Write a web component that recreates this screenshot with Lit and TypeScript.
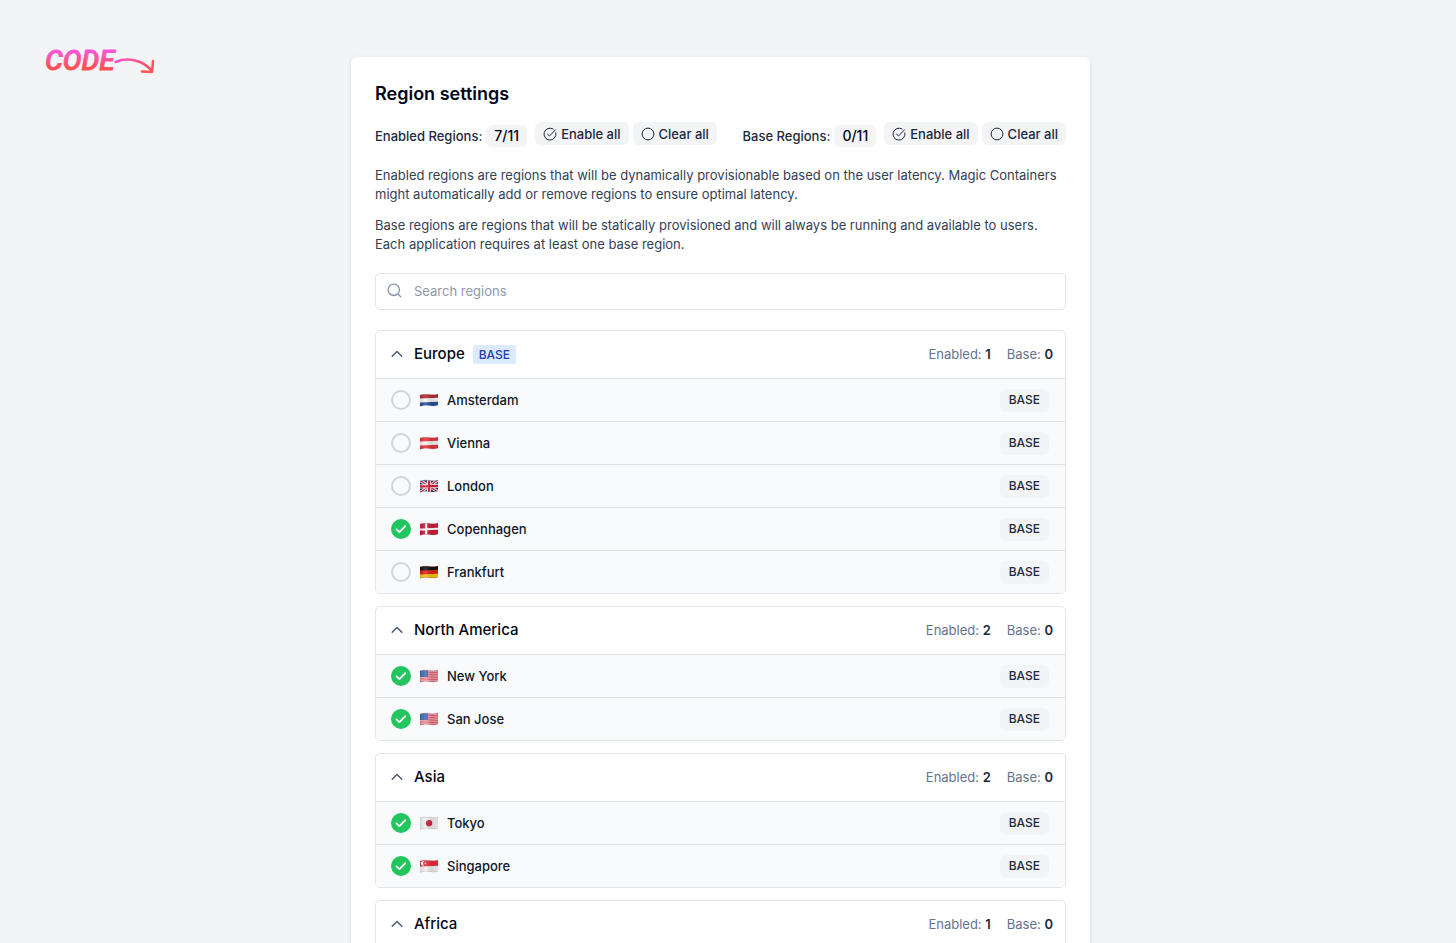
import { LitElement, html, css, svg, nothing } from "lit";
import { customElement, state, property } from "lit/decorators.js";

interface Region { name: string; flag: string; on: boolean }
interface Group { name: string; base?: boolean; enabled: number; regions: Region[] }

const unionJack = svg`
  <rect width="36" height="24" fill="#21357a"/>
  <path d="M0 0 36 24M36 0 0 24" stroke="#fff" stroke-width="6"/>
  <path d="M0 0 36 24M36 0 0 24" stroke="#d3203a" stroke-width="2.4"/>
  <path d="M18 0V24M0 12H36" stroke="#fff" stroke-width="8"/>
  <path d="M18 0V24M0 12H36" stroke="#d3203a" stroke-width="4.6"/>`;

const stars = svg`
  <rect width="36" height="24" fill="#f6d3d6"/>
  <path d="M0 1.5H36M0 5H36M0 8.500H36M0 12H36M0 15.500H36M0 19H36M0 22.500H36" stroke="#e0626e" stroke-width="2.200"/>
  <rect width="16" height="13" fill="#3c6cb0"/>
  <path d="M2 3H15M2 6.500H15M2 10H15" stroke="#7fa1d2" stroke-width="1" stroke-dasharray="1 2"/>`;

const flags: Record<string, unknown> = {
  nl: svg`<rect width="36" height="24" fill="#f5f5f5"/><rect width="36" height="8" fill="#b52a32"/><rect y="16" width="36" height="8" fill="#25509a"/>`,
  at: svg`<rect width="36" height="24" fill="#f7f2f2"/><rect width="36" height="8" fill="#e2383a"/><rect y="16" width="36" height="8" fill="#e2383a"/>`,
  gb: unionJack,
  dk: svg`<rect width="36" height="24" fill="#c9203c"/><path d="M12.500 0V24M0 12H36" stroke="#fff" stroke-width="4"/>`,
  de: svg`<rect width="36" height="24" fill="#dc2418"/><rect width="36" height="8" fill="#111"/><rect y="16" width="36" height="8" fill="#f8c413"/>`,
  us: stars,
  jp: svg`<rect width="36" height="24" fill="#f0f0f0"/><circle cx="18" cy="12" r="6.500" fill="#cf1f3f"/>`,
  sg: svg`<rect width="36" height="24" fill="#f0eeee"/><rect width="36" height="12" fill="#e32f3b"/><path d="M8 2a4.500 4.500 0 1 0 0 8a5 5 0 0 1 0-8Z" fill="#fff"/><circle cx="10.500" cy="6" r="1.800" fill="#f6b8bc"/>`,
};

@customElement("region-flag")
class RegionFlag extends LitElement {
  @property() code = "";
  static styles = css`
    :host { display: flex; }
    svg { width: 18px; height: 14px; display: block; }
  `;
  render() {
    return html`<svg viewBox="0 0 36 28" aria-hidden="true">
      <defs>
        <clipPath id="wave"><path d="M0 4C8 1 13 2 19 3S30 4 36 2V24C30 27 24 26 18 25S7 24 0 27Z"/></clipPath>
        <linearGradient id="shade">
          <stop offset="0" stop-opacity=".08"/><stop offset=".3" stop-color="#fff" stop-opacity=".12"/>
          <stop offset=".65" stop-opacity=".12"/><stop offset="1" stop-opacity=".04"/>
        </linearGradient>
      </defs>
      <g clip-path="url(#wave)">
        <rect width="36" height="28" fill="#d0d0d0"/>
        <g transform="translate(0 3) skewY(-2)">${flags[this.code]}</g>
        <rect width="36" height="28" fill="url(#shade)"/>
      </g>
      <path d="M0 4C8 1 13 2 19 3S30 4 36 2V24C30 27 24 26 18 25S7 24 0 27Z" fill="none" stroke="#000" stroke-opacity=".18"/>
    </svg>`;
  }
}

@customElement("app-root")
class AppRoot extends LitElement {
  @state() private groups: Group[] = [
    { name: "Europe", base: true, enabled: 1, regions: [
      { name: "Amsterdam", flag: "nl", on: false },
      { name: "Vienna", flag: "at", on: false },
      { name: "London", flag: "gb", on: false },
      { name: "Copenhagen", flag: "dk", on: true },
      { name: "Frankfurt", flag: "de", on: false },
    ] },
    { name: "North America", enabled: 2, regions: [
      { name: "New York", flag: "us", on: true },
      { name: "San Jose", flag: "us", on: true },
    ] },
    { name: "Asia", enabled: 2, regions: [
      { name: "Tokyo", flag: "jp", on: true },
      { name: "Singapore", flag: "sg", on: true },
    ] },
    { name: "Africa", enabled: 1, regions: [] },
  ];

  static styles = css`
    * { box-sizing: border-box; }
    :host {
      display: block; position: relative; height: 100vh; overflow: hidden;
      background: #f3f4f6; color: #1e293b;
      font: 13px/20px Inter, sans-serif;
    }
    button, input { font: inherit; color: inherit; }
    button { border: 0; background: none; padding: 0; cursor: pointer; }
    h1, h2, p { margin: 0; }
    svg { display: block; flex: none; }
    .logo { position: absolute; left: 40px; top: 40px; }
    .logo svg { width: 120px; height: 40px; }
    .logo text { font: italic 500 28px Roboto, sans-serif; }
    .page { padding: 57px 15px 0 0; }
    .card {
      max-width: 739px; min-height: 100vh; margin: 0 auto; padding: 24px;
      background: #fff; border-radius: 6px;
      box-shadow: 0 1px 4px rgb(15 23 42 / .12);
    }
    h1 { font-size: 18px; line-height: 26px; font-weight: 600; color: #020617; }
    .summary { display: flex; justify-content: space-between; margin-top: 15px; }
    .tally { display: flex; gap: 4px; align-items: flex-start; }
    .label { padding-top: 4px; font-weight: 500; }
    .count {
      margin: 3px 4px 0 0; padding: 1px 8px; border-radius: 6px;
      background: #f3f4f6; color: #020617; font-weight: 500; font-size: 14px;
    }
    .action {
      display: flex; align-items: center; gap: 4px; height: 23px; padding: 0 8px;
      border-radius: 6px; background: #f3f4f6; font-weight: 500;
    }
    .action svg { width: 14px; height: 14px; }
    .copy { display: grid; gap: 12px; margin-top: 19px; color: #334155; line-height: 19px; }
    .search {
      display: flex; align-items: center; gap: 12px; height: 37px; margin: 19px 0 20px;
      padding: 0 11px 2px; border: 1px solid #e2e4ea; border-radius: 5px; color: #8a93a5;
    }
    .search svg { width: 15px; height: 15px; }
    .search input { flex: 1; min-width: 0; border: 0; outline: 0; padding: 0; background: none; }
    .search input::placeholder { color: #8f98aa; opacity: 1; }
    .groups { display: grid; gap: 12px; }
    .group { border: 1px solid #e2e4ea; border-radius: 5px; overflow: hidden; }
    .head { display: flex; align-items: center; justify-content: space-between; height: 47px; padding: 0 12px 1px 15px; }
    .toggle { display: flex; align-items: center; gap: 11px; color: #475569; }
    .toggle svg { width: 12px; height: 12px; }
    h2 { display: flex; align-items: center; gap: 8px; font-size: 15px; font-weight: 500; color: #020617; }
    .tag {
      padding: 0 6px; border-radius: 3px; background: #dbeafe; color: #1e40af;
      font-size: 12px; line-height: 19px; font-weight: 500;
    }
    .stats { display: flex; gap: 16px; color: #64748b; }
    .stats b { color: #1e293b; font-weight: 600; }
    .row {
      display: flex; align-items: center; justify-content: space-between; height: 43px;
      padding: 0 16px 0 15px; border-top: 1px solid #dfe2e8; background: #f9fafb;
    }
    .pick { display: flex; align-items: center; gap: 9px; color: #0f172a; font-weight: 500; cursor: pointer; }
    .box { display: grid; }
    .box > * { grid-area: 1 / 1; place-self: center; }
    .box input { appearance: none; width: 20px; height: 20px; margin: 0; border: 2px solid #d1d5db; border-radius: 50%; }
    .box input:checked { background: #22c55e; border-color: #22c55e; }
    .box svg { width: 12px; height: 12px; pointer-events: none; }
    .chip {
      height: 23px; padding: 0 9px 2px; border-radius: 6px; background: #f3f4f6;
      color: #1e293b; font-size: 12px; line-height: 21px; font-weight: 500;
    }
  `;

  private setAll(on: boolean) {
    this.groups = this.groups.map((g) => ({ ...g, regions: g.regions.map((r) => ({ ...r, on })) }));
  }

  private tally(label: string, count: string) {
    return html`<div class="tally">
      <span class="label">${label}</span><span class="count">${count}</span>
      <button class="action" @click=${() => this.setAll(true)}>
        <svg viewBox="0 0 14 14" fill="none" stroke="currentColor" stroke-linecap="round" stroke-linejoin="round">
          <path d="M12.900 5.900A6 6 0 1 1 10.200 2"/><path d="M4.500 7.200 6.500 9 12.500 2.800"/>
        </svg>Enable all</button>
      <button class="action" @click=${() => this.setAll(false)}>
        <svg viewBox="0 0 14 14" fill="none" stroke="currentColor"><circle cx="7" cy="7" r="5.900"/></svg>Clear all</button>
    </div>`;
  }

  private row(r: Region) {
    return html`<div class="row">
      <label class="pick">
        <span class="box">
          <input type="checkbox" .checked=${r.on} @change=${() => { r.on = !r.on; this.requestUpdate(); }} />
          ${r.on ? html`<svg viewBox="0 0 12 12" fill="none" stroke="#fff" stroke-width="1.800" stroke-linecap="round" stroke-linejoin="round"><path d="M1.500 6.300 4.400 9.100 10.300 3.200"/></svg>` : nothing}
        </span>
        <region-flag code=${r.flag}></region-flag>
        <span>${r.name}</span>
      </label>
      <button class="chip">BASE</button>
    </div>`;
  }

  render() {
    return html`
      <a class="logo" href="#" aria-label="Code">
        <svg viewBox="0 0 120 40" fill="none">
          <defs>
            <linearGradient id="ink" gradientUnits="userSpaceOnUse" x1="0" y1="8" x2="0" y2="32">
              <stop offset=".1" stop-color="#ff55dc"/><stop offset=".8" stop-color="#ff4f55"/>
            </linearGradient>
            <linearGradient id="tail" gradientUnits="userSpaceOnUse" x1="75" y1="0" x2="114" y2="0">
              <stop stop-color="#ff55dc"/><stop offset="1" stop-color="#ff5050"/>
            </linearGradient>
          </defs>
          <text x="5" y="30" fill="url(#ink)" stroke="url(#ink)" stroke-width=".8" stroke-linejoin="round">CODE</text>
          <path d="M75.500 22C88 17 103 20 112 31" stroke="url(#tail)" stroke-width="2.500" stroke-linecap="round"/>
          <path d="M113 21 112 32 102 31.500" stroke="#ff5555" stroke-width="2.500" stroke-linecap="round" stroke-linejoin="round"/>
        </svg>
      </a>
      <div class="page">
        <main class="card">
          <h1>Region settings</h1>
          <div class="summary">${this.tally("Enabled Regions:", "7/11")}${this.tally("Base Regions:", "0/11")}</div>
          <div class="copy">
            <p>Enabled regions are regions that will be dynamically provisionable based on the user latency. Magic Containers might automatically add or remove regions to ensure optimal latency.</p>
            <p>Base regions are regions that will be statically provisioned and will always be running and available to users. Each application requires at least one base region.</p>
          </div>
          <label class="search">
            <svg viewBox="0 0 15 15" fill="none" stroke="currentColor" stroke-width="1.300" stroke-linecap="round"><circle cx="6.800" cy="6.800" r="5.700"/><path d="M11 11 13.700 13.700"/></svg>
            <input type="search" placeholder="Search regions" />
          </label>
          <div class="groups">
            ${this.groups.map((g) => html`<section class="group">
              <div class="head">
                <button class="toggle" aria-expanded="true">
                  <svg viewBox="0 0 12 12" fill="none" stroke="currentColor" stroke-width="1.400" stroke-linecap="round" stroke-linejoin="round"><path d="M1.200 8.300 6 3.500 10.800 8.300"/></svg>
                  <h2>${g.name}${g.base ? html`<span class="tag">BASE</span>` : nothing}</h2>
                </button>
                <div class="stats"><span>Enabled: <b>${g.enabled}</b></span><span>Base: <b>0</b></span></div>
              </div>
              ${g.regions.map((r) => this.row(r))}
            </section>`)}
          </div>
        </main>
      </div>`;
  }
}
